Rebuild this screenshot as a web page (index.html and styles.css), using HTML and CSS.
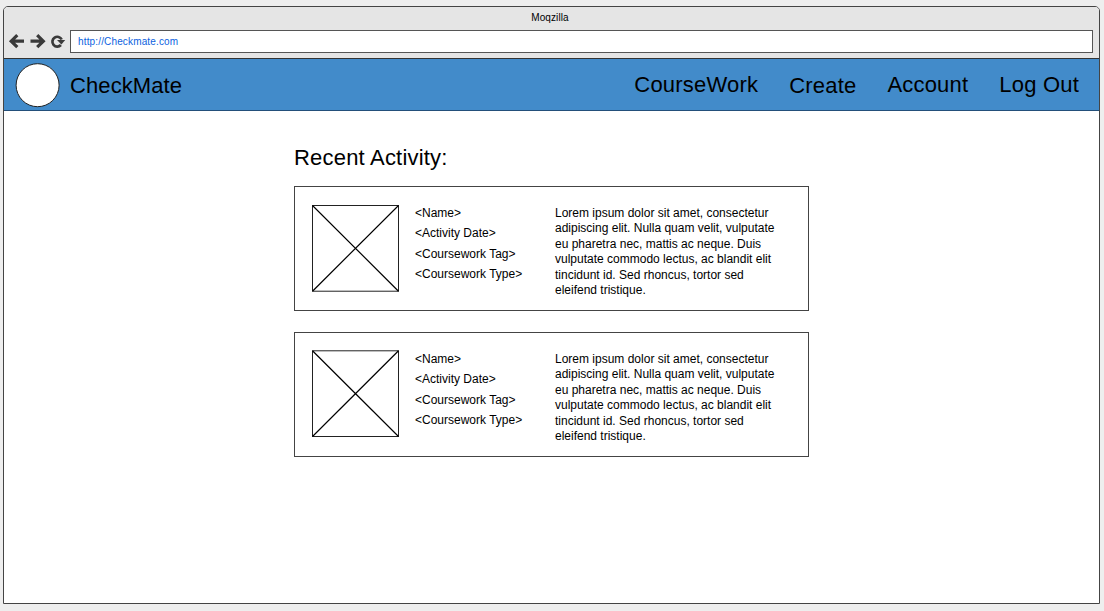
FILE: index.html
```html
<!DOCTYPE html>
<html lang="en">
<head>
<meta charset="utf-8">
<title>CheckMate</title>
<link rel="stylesheet" href="styles.css">
</head>
<body>
<div class="window">
  <div class="chrome">
    <div class="title">Moqzilla</div>
    <div class="toolbar">
      <svg class="controls" width="66" height="24" viewBox="0 0 66 24" fill="none" stroke="#3a3a3a" stroke-width="3.200">
        <path d="M20 11.200H7.500M13.300 5.200L7.200 11.200L13.300 17.200"/>
        <path d="M26.500 11.200H39M33.200 5.200L39.300 11.200L33.200 17.200"/>
        <path d="M56.900 15A4.900 4.900 0 1 1 57.700 9.500" stroke-width="2.700"/>
        <path d="M53 10H61.200L57.400 14.600Z" fill="#3a3a3a" stroke="none"/>
      </svg>
      <div class="address">http://Checkmate.com</div>
    </div>
  </div>
  <header class="header">
    <svg class="logo" width="46" height="46" viewBox="0 0 46 46"><circle cx="22.600" cy="23.200" r="21.500" fill="#fff" stroke="#222"/></svg>
    <span class="brand">CheckMate</span>
    <nav class="nav">
      <a class="coursework">CourseWork</a>
      <a class="create">Create</a>
      <a class="account">Account</a>
      <a class="logout">Log Out</a>
    </nav>
  </header>
  <main class="main">
    <h1 class="heading">Recent Activity:</h1>
    <article class="card">
      <svg class="thumb" width="88" height="88" viewBox="0 0 88 88" fill="none" stroke="#222"><rect x=".5" y=".5" width="86" height="85.700"/><path d="M.5 .5L86.500 86.200M86.500 .5L.5 86.200" stroke="#000" stroke-width="1.200"/></svg>
      <ul class="details"><li>&lt;Name&gt;</li><li>&lt;Activity Date&gt;</li><li>&lt;Coursework Tag&gt;</li><li>&lt;Coursework Type&gt;</li></ul>
      <p class="summary">Lorem ipsum dolor sit amet, consectetur<br>adipiscing elit. Nulla quam velit, vulputate<br>eu pharetra nec, mattis ac neque. Duis<br>vulputate commodo lectus, ac blandit elit<br>tincidunt id. Sed rhoncus, tortor sed<br>eleifend tristique.</p>
    </article>
    <article class="card">
      <svg class="thumb" width="88" height="88" viewBox="0 0 88 88" fill="none" stroke="#222"><rect x=".5" y="-.2" width="86" height="85.700"/><path d="M.5 -.2L86.500 85.500M86.500 -.2L.5 85.500" stroke="#000" stroke-width="1.200"/></svg>
      <ul class="details"><li>&lt;Name&gt;</li><li>&lt;Activity Date&gt;</li><li>&lt;Coursework Tag&gt;</li><li>&lt;Coursework Type&gt;</li></ul>
      <p class="summary">Lorem ipsum dolor sit amet, consectetur<br>adipiscing elit. Nulla quam velit, vulputate<br>eu pharetra nec, mattis ac neque. Duis<br>vulputate commodo lectus, ac blandit elit<br>tincidunt id. Sed rhoncus, tortor sed<br>eleifend tristique.</p>
    </article>
  </main>
</div>
</body>
</html>
```
FILE: styles.css
```css
* { box-sizing: border-box; }
body {
  margin: 0;
  height: 611px;
  padding: 6px 4px 7px 3px;
  background: #eee;
  color: #000;
  font-family: "Liberation Sans", Arial, sans-serif;
  overflow: hidden;
}
.window {
  height: 598px;
  border: 1px solid #444;
  border-radius: 5px 5px 0 0;
  background: #fff;
  overflow: hidden;
}
.chrome {
  height: 52px;
  background: #e5e5e5;
  border-bottom: 1px solid #333;
}
.title {
  height: 23px;
  padding-right: 3px;
  font-size: 10px;
  line-height: 22px;
  letter-spacing: .1px;
  text-align: center;
}
.toolbar { display: flex; padding-right: 6px; }
.controls { flex: none; }
.address {
  flex: 1;
  height: 23px;
  border: 1px solid #555;
  padding-left: 7px;
  background: #fff;
  color: #0b5fe0;
  font-size: 10px;
  line-height: 22px;
  letter-spacing: .15px;
}
.header {
  display: flex;
  height: 52px;
  padding: 3px 20px 0 11px;
  border-bottom: 1px solid #234f7a;
  background: #428bca;
  font-size: 22px;
  line-height: 26px;
}
.logo { flex: none; overflow: visible; }
.brand { padding: 11px 0 0 9px; letter-spacing: .1px; }
.nav { display: flex; margin-left: auto; gap: 31px; padding-top: 10px; letter-spacing: .2px; }
.create { padding-top: 1px; }
.main { width: 515px; margin: 34px 0 0 290px; }
.heading {
  margin: 0 0 15px;
  font-size: 22px;
  font-weight: 400;
  line-height: 26px;
  letter-spacing: .2px;
}
.card {
  display: flex;
  height: 125px;
  margin-bottom: 21px;
  padding: 18px 0 0 17px;
  border: 1px solid #444;
  font-size: 12px;
}
.thumb { flex: none; overflow: visible; }
.details {
  width: 140px;
  margin: -2.300px 0 0 15px;
  padding: 0;
  list-style: none;
  line-height: 20.600px;
}
.summary { margin: 1px 0 0; line-height: 15.400px; white-space: nowrap; }
```
